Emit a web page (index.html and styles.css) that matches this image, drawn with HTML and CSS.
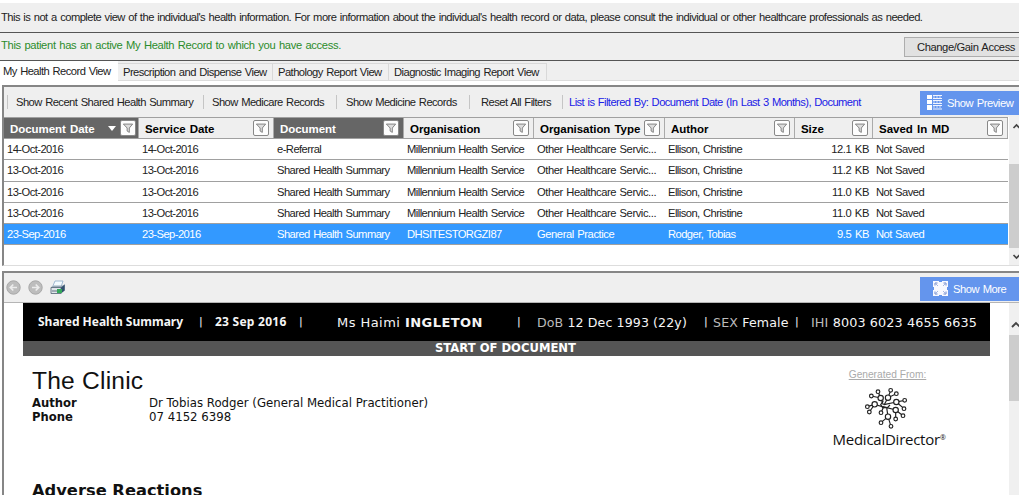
FILE: index.html
```html
<!DOCTYPE html>
<html lang="en">
<head>
    <meta charset="UTF-8">
    <meta name="viewport" content="width=device-width, initial-scale=1.0">
    <title>My Health Record</title>
    <link rel="stylesheet" href="styles.css">
</head>
<body>
    <!-- shared icons -->
    <svg class="defs" width="0" height="0">
        <symbol id="funnel" viewBox="0 0 15 16">
            <path d="M2.200 3.500h10.600L9 8v5L6.500 11.500V8z" fill="#ddd" stroke="#777" stroke-width="1"/>
        </symbol>
    </svg>

    <div class="notice">This is not a complete view of the individual's health information. For more information about the individual's health record or data, please consult the individual or other healthcare professionals as needed.</div>

    <div class="status">
        <span class="status-text">This patient has an active My Health Record to which you have access.</span>
        <button class="access-btn">Change/Gain Access</button>
    </div>

    <div class="tabs">
        <div class="tab active">My Health Record View</div>
        <div class="tab prescription">Prescription and Dispense View</div>
        <div class="tab pathology">Pathology Report View</div>
        <div class="tab imaging">Diagnostic Imaging Report View</div>
    </div>

    <div class="panel list-panel">
        <div class="toolbar">
            <div class="tool recent">Show Recent Shared Health Summary</div>
            <div class="tool medicare">Show Medicare Records</div>
            <div class="tool medicine">Show Medicine Records</div>
            <div class="tool reset">Reset All Filters</div>
            <div class="tool filter-info">List is Filtered By: Document Date (In Last 3 Months), Document</div>
            <button class="blue-btn preview-btn">
                <svg width="15" height="15" viewBox="0 0 15 15">
                    <path d="M0 0h5v4H0zM0 5h5v4H0zM0 10h5v5H0z" fill="#fff"/>
                    <path d="M6 .5h9M6 3.500h9M6 5.500h9M6 8.500h9M6 10.500h9M6 14h9" stroke="#f2f5ff"/>
                    <path d="M6 2h9M6 7h9M6 12h9" stroke="#c9d9fb" stroke-dasharray="2 1"/>
                </svg>
                Show Preview
            </button>
        </div>
        <div class="list">
            <div class="grid">
                <div class="row head">
                    <div class="th filtered">Document Date<i class="sort"></i><svg class="funnel"><use href="#funnel"/></svg></div>
                    <div class="th">Service Date<svg class="funnel"><use href="#funnel"/></svg></div>
                    <div class="th filtered">Document<svg class="funnel"><use href="#funnel"/></svg></div>
                    <div class="th">Organisation<svg class="funnel"><use href="#funnel"/></svg></div>
                    <div class="th">Organisation Type<svg class="funnel"><use href="#funnel"/></svg></div>
                    <div class="th">Author<svg class="funnel"><use href="#funnel"/></svg></div>
                    <div class="th">Size<svg class="funnel"><use href="#funnel"/></svg></div>
                    <div class="th saved">Saved In MD<svg class="funnel"><use href="#funnel"/></svg></div>
                </div>
                <div class="row">
                    <div>14-Oct-2016</div><div>14-Oct-2016</div><div>e-Referral</div><div>Millennium Health Service</div><div class="type">Other Healthcare Servic...</div><div>Ellison, Christine</div><div class="size">12.1 KB</div><div>Not Saved</div>
                </div>
                <div class="row">
                    <div>13-Oct-2016</div><div>13-Oct-2016</div><div>Shared Health Summary</div><div>Millennium Health Service</div><div class="type">Other Healthcare Servic...</div><div>Ellison, Christine</div><div class="size">11.2 KB</div><div>Not Saved</div>
                </div>
                <div class="row">
                    <div>13-Oct-2016</div><div>13-Oct-2016</div><div>Shared Health Summary</div><div>Millennium Health Service</div><div class="type">Other Healthcare Servic...</div><div>Ellison, Christine</div><div class="size">11.0 KB</div><div>Not Saved</div>
                </div>
                <div class="row">
                    <div>13-Oct-2016</div><div>13-Oct-2016</div><div>Shared Health Summary</div><div>Millennium Health Service</div><div class="type">Other Healthcare Servic...</div><div>Ellison, Christine</div><div class="size">11.0 KB</div><div>Not Saved</div>
                </div>
                <div class="row selected">
                    <div>23-Sep-2016</div><div>23-Sep-2016</div><div>Shared Health Summary</div><div>DHSITESTORGZI87</div><div class="type">General Practice</div><div>Rodger, Tobias</div><div class="size">9.5 KB</div><div>Not Saved</div>
                </div>
            </div>
            <div class="scrollbar list-scroll">
                <svg width="11" height="17" viewBox="0 0 11 17"><path d="M4.500 11l3-3 3 3" fill="none" stroke="#444" stroke-width="1.700"/></svg>
                <div class="thumb"></div>
                <svg width="11" height="17" viewBox="0 0 11 17"><path d="M4.500 7l3 3 3-3" fill="none" stroke="#444" stroke-width="1.700"/></svg>
            </div>
        </div>
    </div>

    <div class="panel doc-panel">
        <div class="doc-toolbar">
            <svg width="15" height="15" viewBox="0 0 15 15"><circle cx="7.500" cy="7.500" r="6.700" fill="#bdbdbd" stroke="#a8a8a8"/><path d="M11 7.500H4.500M7.300 4.500L4.300 7.500l3 3" fill="none" stroke="#ececec" stroke-width="1.700"/></svg>
            <svg width="15" height="15" viewBox="0 0 15 15"><circle cx="7.500" cy="7.500" r="6.700" fill="#bdbdbd" stroke="#a8a8a8"/><path d="M4 7.500h6.500M7.700 4.500l3 3-3 3" fill="none" stroke="#ececec" stroke-width="1.700"/></svg>
            <svg width="16" height="15" viewBox="0 0 16 15">
                <path d="M5 1h8l-2 6H2.500z" fill="#f4fbff" stroke="#8cabc8" stroke-width=".8"/>
                <path d="M1 7l3-1.500h10L11 8H1z" fill="#9aa9b8"/>
                <path d="M1 7.500h10v6H1z" fill="#dfe5ea" stroke="#60707f" stroke-width=".9"/>
                <path d="M11 7.500l3.800-3.200v6.200L11 13.500z" fill="#32506e"/>
                <path d="M2 11h8" stroke="#60707f"/>
                <path d="M7 9h5v4H7z" fill="#35a85a"/>
            </svg>
            <button class="blue-btn more-btn">
                <svg width="15" height="15" viewBox="0 0 15 15">
                    <path d="M0 0h15v15H0z" fill="#f8f9ff"/>
                    <path d="M2 4.500V2h2.500M10.500 2H13v2.500M13 10.500V13h-2.500M4.500 13H2v-2.500" fill="none" stroke="#6c88cc"/>
                    <path d="M2.500 2.500L5 5M12.500 2.500L10 5M12.500 12.500L10 10M2.500 12.500L5 10" stroke="#a5b6e2"/>
                    <path d="M6 0h3v1H6zM6 14h3v1H6zM0 6h1v3H0zM14 6h1v3h-1z" fill="#6495ed"/>
                </svg>
                Show More
            </button>
        </div>
        <div class="viewer">
            <div class="document">
                <div class="banner">
                    <b class="doc-type">Shared Health Summary</b>
                    <b class="bar bar-date">|</b>
                    <b class="doc-date">23 Sep 2016</b>
                    <b class="bar bar-name">|</b>
                    <span class="name">Ms Haimi <b>INGLETON</b></span>
                    <span class="bar bar-dob">|</span>
                    <span class="dob"><em>DoB</em> 12 Dec 1993 (22y)</span>
                    <span class="bar bar-sex">|</span>
                    <span class="sex"><em>SEX</em> Female</span>
                    <span class="bar bar-ihi">|</span>
                    <span class="ihi"><em>IHI</em> 8003 6023 4655 6635</span>
                </div>
                <div class="start">START OF DOCUMENT</div>
                <div class="clinic">
                    <div>
                        <h1>The Clinic</h1>
                        <dl>
                            <dt>Author</dt><dd>Dr Tobias Rodger (General Medical Practitioner)</dd>
                            <dt>Phone</dt><dd>07 4152 6398</dd>
                        </dl>
                    </div>
                    <div class="vendor">
                        <div class="generated">Generated From:</div>
                        <svg class="logo" width="44" height="42" viewBox="250 185 132 126" fill="#fff" stroke="#222" stroke-width="3.500">
                            <path d="M292 199l8 19-28-6M300 218l8 20M330 195l-8 22 25-12M322 217l-12 22M372 225l-25 5 23 20M347 230l-37 8M367 271l-22-17v27M345 254l-37-10M301 292l21-18 9 29M322 274l-4-27M301 262l9-20M260 244l22-7-16 23M282 237l26 8"/>
                            <path d="M308 226l-8 12 6 9 14 0 8-8" fill="none"/>
                            <g>
                                <circle cx="300" cy="218" r="8"/><circle cx="322" cy="217" r="8"/><circle cx="347" cy="230" r="8"/>
                                <circle cx="345" cy="254" r="8"/><circle cx="322" cy="274" r="8"/><circle cx="282" cy="237" r="8"/>
                            </g>
                            <g>
                                <circle cx="292" cy="199" r="5.500"/><circle cx="272" cy="212" r="5.500"/><circle cx="330" cy="195" r="5.500"/>
                                <circle cx="347" cy="205" r="5.500"/><circle cx="372" cy="225" r="5.500"/><circle cx="370" cy="250" r="5.500"/>
                                <circle cx="367" cy="271" r="5.500"/><circle cx="345" cy="281" r="5.500"/><circle cx="301" cy="292" r="5.500"/>
                                <circle cx="331" cy="303" r="5.500"/><circle cx="301" cy="262" r="5.500"/><circle cx="260" cy="244" r="5.500"/>
                                <circle cx="266" cy="260" r="5.500"/>
                            </g>
                        </svg>
                        <div class="brand">MedicalDirector<sup>®</sup></div>
                    </div>
                </div>
                <h2>Adverse Reactions</h2>
            </div>
            <div class="scrollbar doc-scroll">
                <svg width="11" height="32" viewBox="0 0 11 32"><path d="M3 24l4-4 4 4" fill="none" stroke="#444" stroke-width="1.900"/></svg>
                <div class="thumb"></div>
            </div>
        </div>
    </div>
</body>
</html>
```
FILE: styles.css
```css
* {
    box-sizing: border-box;
}

body {
    margin: 0;
    padding-top: 3px;
    height: 495px;
    overflow: hidden;
    background: #fff;
    color: #222;
    font-family: "Liberation Sans", Arial, sans-serif;
    font-size: 11.2px;
    letter-spacing: -0.55px;
    word-spacing: 0.8px;
    white-space: nowrap;
}

svg {
    display: block;
    flex: none;
}

.defs {
    position: absolute;
}

button {
    font: inherit;
    letter-spacing: inherit;
    word-spacing: inherit;
    padding: 0;
    flex: none;
}

.notice {
    height: 30px;
    padding-left: 1px;
    line-height: 29px;
    letter-spacing: -0.535px;
    background: #efefef;
    border-bottom: 1px solid #555;
}

.status {
    display: flex;
    justify-content: space-between;
    height: 28px;
    padding-left: 1px;
    background: #efefef;
    border-bottom: 1px solid #555;
}

.status-text {
    line-height: 25px;
    letter-spacing: -0.33px;
    color: #2b8c2b;
}

.access-btn {
    width: 115px;
    height: 20px;
    margin-top: 4px;
    padding-left: 8px;
    letter-spacing: -0.4px;
    color: #222;
    background: #e1e1e1;
    border: 1px solid #adadad;
    border-right: 0;
}

/* tabs */
.tabs {
    display: flex;
    align-items: flex-end;
    height: 20px;
    background: #efefef;
    border-bottom: 1px solid #dcdcdc;
}

.tab {
    height: 17px;
    line-height: 17px;
    padding-left: 5px;
    background: #f0f0f0;
    border: 1px solid #d9d9d9;
    border-width: 1px 1px 0 0;
}

.tab.active {
    width: 118px;
    height: 20px;
    margin-bottom: -1px;
    padding-left: 3px;
    line-height: 20px;
    background: #fff;
    border: 0;
}

.tab.prescription {
    width: 155px;
    padding-left: 5px;
}

.tab.pathology {
    width: 116px;
}

.tab.imaging {
    width: 158px;
}

/* list of documents */
.panel {
    margin-left: 2px;
    border: 2px solid #868686;
    border-right: 0;
    border-bottom: 0;
}

.list-panel {
    height: 181px;
    margin-top: 4px;
    border-bottom: 1px solid #ddd;
}

.toolbar {
    display: flex;
    align-items: center;
    height: 30px;
    padding-left: 3px;
    background: #efefef;
}

.tool {
    height: 14px;
    line-height: 15px;
    padding-left: 8px;
    border-left: 1px solid #c5c5c5;
}

.recent {
    width: 196px;
}

.medicare {
    width: 133px;
}

.medicine {
    width: 133px;
    padding-left: 9px;
}

.reset {
    width: 93px;
    padding-left: 11px;
}

.filter-info {
    padding-left: 6px;
    letter-spacing: -0.57px;
    color: #2020e6;
}

.blue-btn {
    display: flex;
    align-items: center;
    width: 99px;
    height: 24px;
    margin-left: auto;
    border: 0;
    letter-spacing: -0.45px;
    color: #fff;
    background: #6495ed;
}

.preview-btn {
    padding-left: 7px;
    gap: 5px;
    margin-top: 1px;
}

.list {
    display: flex;
    justify-content: space-between;
    height: 148px;
}

.grid {
    width: 1004px;
}

.row {
    display: grid;
    grid-template-columns: 135px 135px 130px 130px 131px 130px 78px 135px;
    height: 21.3px;
    line-height: 21px;
    border-bottom: 1px solid #a0a0a0;
}

.row > div {
    padding-left: 3px;
}

.row .type {
    letter-spacing: -0.43px;
}

.row .size {
    padding: 0 4px 0 0;
    text-align: right;
    letter-spacing: -0.4px;
}

.row.head {
    height: 22px;
    line-height: 22px;
    border-top: 1px solid #a0a0a0;
    background: #efefef;
    font-size: 11.5px;
    font-weight: bold;
    letter-spacing: -0.05px;
    word-spacing: 1px;
    color: #000;
}

.row .th {
    display: flex;
    height: 20px;
    padding: 0 4px 0 6px;
    border-right: 1px solid #aaa;
}

.row .th.saved {
    letter-spacing: 0;
}

.row .th.filtered {
    color: #fff;
    background: #666;
}

.funnel {
    width: 16px;
    height: 16px;
    margin: 2px 0 0 auto;
    background: #fdfdfd;
    border: 1px solid #888;
    border-radius: 2px;
}

.sort {
    height: 5px;
    margin: 8px 0 0 13px;
    border: 4px solid transparent;
    border-top: 5px solid #fff;
    border-bottom: 0;
}

.sort + .funnel {
    margin-left: 4px;
}

.row.selected {
    color: #fff;
    background: #3399ff;
}

.scrollbar {
    width: 10px;
    background: #f0f0f0;
}

.thumb {
    background: #cdcdcd;
}

.list-scroll {
    display: flex;
    flex-direction: column;
    overflow: hidden;
}

.list-scroll .thumb {
    margin-top: auto;
    height: 84px;
}

/* document viewer */
.doc-panel {
    height: 224px;
    margin-top: 5px;
}

.doc-toolbar {
    display: flex;
    align-items: center;
    gap: 7px;
    height: 30px;
    padding-left: 2px;
    background: #efefef;
    border-bottom: 1px solid #b5b5b5;
}

.more-btn {
    padding-left: 13px;
    gap: 5px;
    margin-top: 2px;
}

.viewer {
    display: flex;
    justify-content: space-between;
    height: 192px;
}

.document {
    width: 986px;
    padding-left: 19px;
    font-family: "DejaVu Sans", Verdana, sans-serif;
    letter-spacing: 0;
    word-spacing: 0;
    color: #111;
}

.banner {
    display: flex;
    height: 38px;
    padding-left: 15px;
    line-height: 39px;
    font-size: 12.6px;
    color: #f5f5f5;
    background: #000;
}

.banner em {
    font-style: normal;
    color: #bbb;
}

.doc-type,
.doc-date {
    line-height: 37px;
    font-family: "Noto Sans", sans-serif;
    font-size: 12px;
}

.doc-type {
    width: 161px;
}

.doc-date {
    width: 84px;
    letter-spacing: 0.25px;
}

.bar {
    width: 16px;
    line-height: 37px;
    font-size: 11px;
    font-weight: normal;
}

.bar-name {
    width: 38px;
}

.name {
    width: 180px;
    font-size: 13px;
    letter-spacing: 0.45px;
}

.bar-dob {
    width: 20px;
}

.dob {
    width: 167px;
    letter-spacing: 0.1px;
}

.bar-sex {
    width: 9px;
}

.sex {
    width: 82px;
    letter-spacing: 0.15px;
}

.ihi {
    font-size: 12.8px;
    letter-spacing: 0.1px;
}

.start {
    height: 15px;
    line-height: 14px;
    padding-left: 412px;
    font-size: 11.6px;
    font-weight: bold;
    color: #fff;
    background: #555;
}

.clinic {
    display: flex;
    justify-content: space-between;
    height: 125px;
    padding: 12px 44px 0 9px;
}

h1 {
    margin: 0;
    font: 24.6px/26px "Liberation Sans", Arial, sans-serif;
    letter-spacing: 0.2px;
}

dl {
    display: grid;
    grid-template-columns: 117px auto;
    margin: 3px 0 0;
    line-height: 13.7px;
    font-size: 11.75px;
}

dt {
    font-size: 11.6px;
    font-weight: bold;
}

dd {
    margin: 0;
}

.vendor {
    display: flex;
    flex-direction: column;
    align-items: center;
    width: 114px;
}

.generated {
    height: 19px;
    margin-right: 3px;
    line-height: 13px;
    font-family: "Liberation Sans", Arial, sans-serif;
    font-size: 10.2px;
    text-decoration: underline;
    color: #aaa;
}

.logo {
    margin-right: 6px;
}

.brand {
    line-height: 20px;
    font-family: "Open Sans", sans-serif;
    font-size: 15px;
    letter-spacing: -0.25px;
    color: #111;
}

.brand sup {
    font-size: 7px;
    line-height: 0;
    vertical-align: 5px;
}

h2 {
    margin: 0;
    padding-left: 9px;
    line-height: 20px;
    font-size: 16.3px;
}

.doc-scroll .thumb {
    height: 66px;
}
```
